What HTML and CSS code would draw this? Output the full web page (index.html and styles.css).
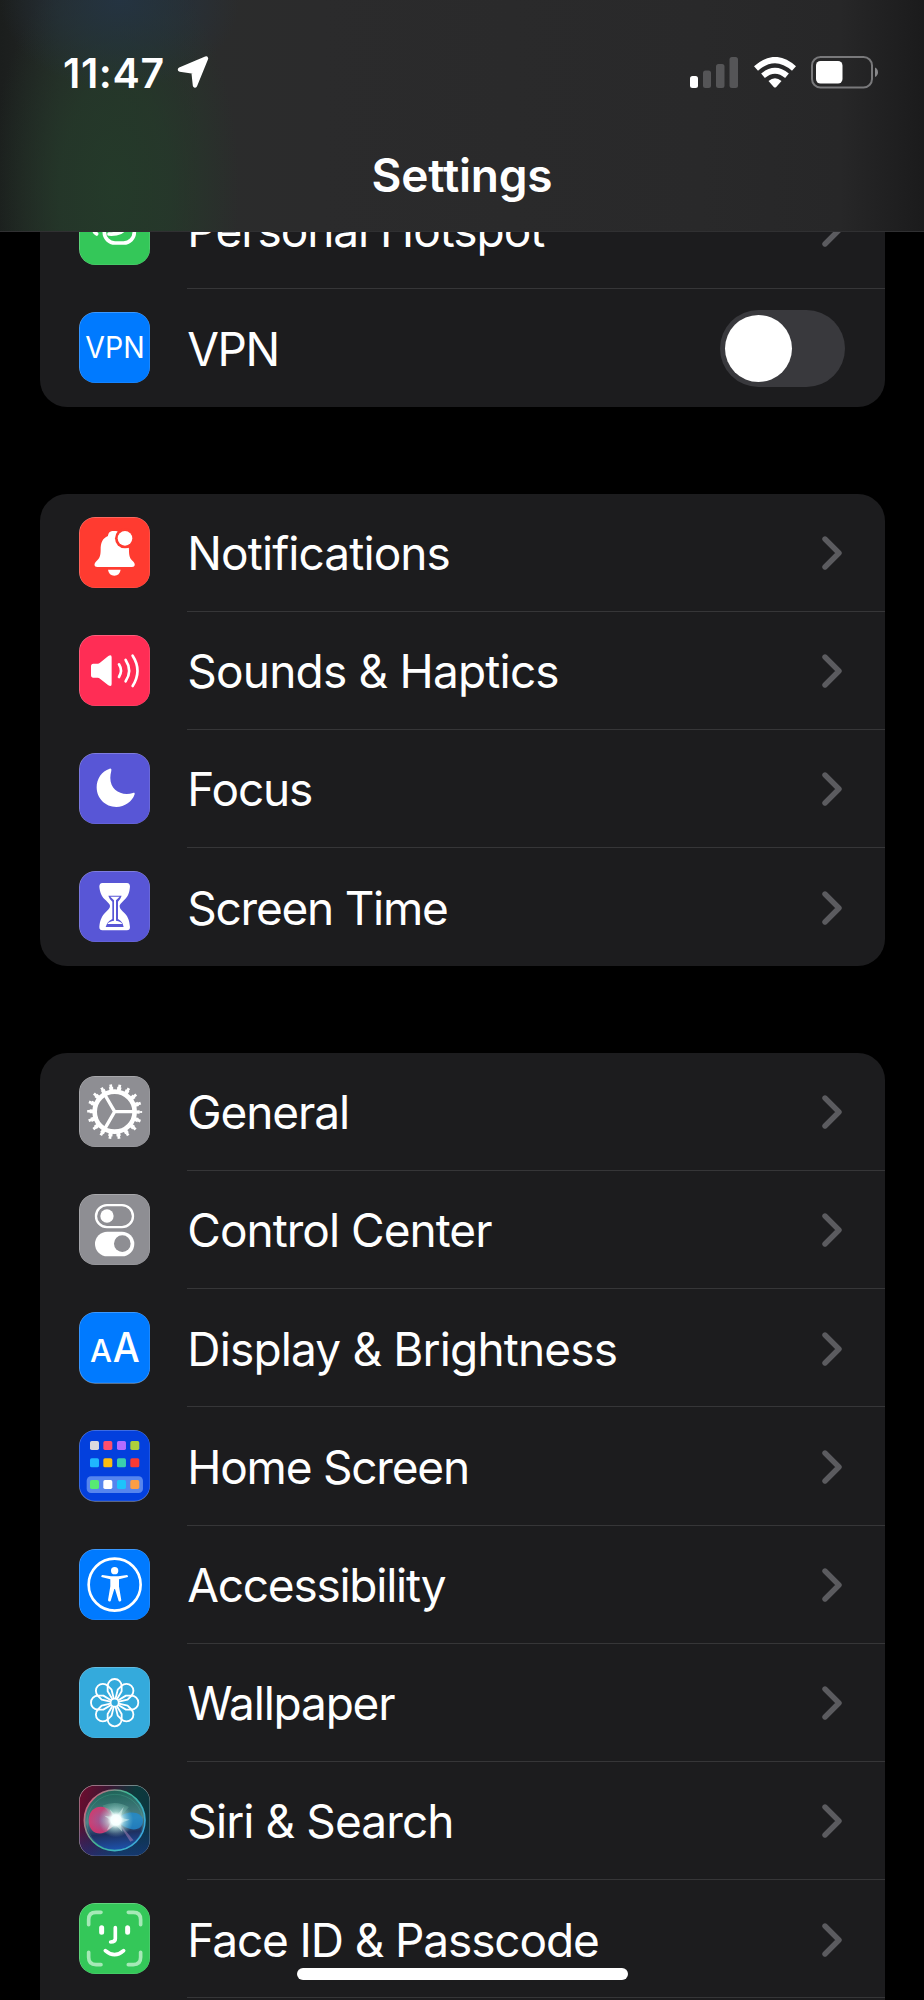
FILE: index.html
```html
<!DOCTYPE html>
<html lang="en">
<head>
  <meta charset="UTF-8" />
  <meta name="viewport" content="width=device-width, initial-scale=1.0"/>
  <title>Settings</title>
  <link rel="stylesheet" href="styles.css">
</head>
<body>

  <!-- shared shapes -->
  <svg class="defs" width="0" height="0">
    <symbol id="chevron" viewBox="0 0 20 34">
      <path d="M3 3L17 17L3 31" fill="none" stroke="#5b5b5f" stroke-width="5.4" stroke-linecap="round" stroke-linejoin="round"/>
    </symbol>
    <symbol id="petal" viewBox="-107 -107 214 214">
      <path d="M-7 -11L-21 -34V-50A21 21 0 0 1 21 -50V-34L7 -11" fill="none" stroke="#fff" stroke-width="5.5" stroke-linejoin="round"/>
    </symbol>
  </svg>

  <header class="header">
    <div class="status">
      <span class="time">11:47</span>
      <svg class="location" viewBox="0 0 33 33">
        <path d="M3 13.5L29 2.5L18 29.5L16.5 15.5Z" fill="#fff" stroke="#fff" stroke-width="4.4" stroke-linejoin="round"/>
      </svg>
      <svg class="signal" viewBox="0 0 48 31">
        <rect x="0" y="19" width="8" height="12" rx="2.5" fill="#fff"/>
        <rect x="13" y="13.5" width="8" height="17.5" rx="2.5" fill="#555557"/>
        <rect x="26" y="7" width="8.5" height="24" rx="2.5" fill="#555557"/>
        <rect x="39.5" y="0" width="8.5" height="31" rx="2.5" fill="#555557"/>
      </svg>
      <svg class="wifi" viewBox="0 0 42 31">
        <g fill="none" stroke="#fff">
          <path d="M2 11.5Q21 -5.5 40 11.5" stroke-width="6"/>
          <path d="M9 18.8Q21 8.8 33 18.8" stroke-width="5.8"/>
        </g>
        <path d="M14.5 24Q21 18.500 27.5 24L22 30.2Q21 31 20 30.2Z" fill="#fff"/>
      </svg>
      <svg class="battery" viewBox="0 0 68 33">
        <rect x="1" y="1" width="60" height="30.5" rx="8.5" fill="none" stroke="#79797b" stroke-width="2"/>
        <rect x="5" y="5" width="26.5" height="22.5" rx="4.5" fill="#fff"/>
        <path d="M64 11.5Q67 13 67 16.3T64 21Z" fill="#88888a"/>
      </svg>
    </div>
    <h1 class="title">Settings</h1>
  </header>

  <main class="list">

    <section class="group">
      <div class="row">
        <svg class="icon" viewBox="0 0 214 214">
          <rect class="tile green" width="214" height="214"/>
          <g fill="none" stroke="#fff" stroke-width="11" stroke-linecap="round">
            <rect x="76" y="62" width="90" height="85" rx="32"/>
            <path d="M44 110Q47 117 53 120M90 120Q128 122 137 104V80"/>
          </g>
        </svg>
        <div class="content">
          <span class="label hotspot">Personal Hotspot</span>
          <svg class="chevron"><use href="#chevron"/></svg>
        </div>
      </div>
      <div class="row">
        <svg class="icon" viewBox="0 0 214 214">
          <rect class="tile blue" width="214" height="214"/>
          <text x="19" y="137" font-size="91" textLength="178" lengthAdjust="spacingAndGlyphs">VPN</text>
        </svg>
        <div class="content">
          <span class="label vpn">VPN</span>
          <div class="toggle"><div class="knob"></div></div>
        </div>
      </div>
    </section>

    <section class="group">
      <div class="row">
        <svg class="icon" viewBox="0 0 214 214">
          <rect class="tile red" width="214" height="214"/>
          <path d="M105 42C92 42 88 48 87 57C70 64 65 78 65 98C65 118 61 124 52 133C44 141 45 150 55 150H159C169 150 170 141 162 133C153 124 150 118 150 98C150 78 142 64 127 57C125 48 121 42 105 42Z" fill="#fff"/>
          <path d="M87 158H125Q122 176 106 176T87 158Z" fill="#fff"/>
          <circle cx="138" cy="64" r="30" fill="#ff3b30"/>
          <circle cx="138" cy="64" r="22" fill="#fff"/>
        </svg>
        <div class="content">
          <span class="label">Notifications</span>
          <svg class="chevron"><use href="#chevron"/></svg>
        </div>
      </div>
      <div class="row">
        <svg class="icon" viewBox="0 0 214 214">
          <rect class="tile pink" width="214" height="214"/>
          <path d="M43 86H56Q60 86 63 83L88 63Q98 57 98 67V147Q98 157 88 151L63 131Q60 128 56 128H43Q36 128 36 120V94Q36 86 43 86Z" fill="#fff"/>
          <g fill="none" stroke="#fff" stroke-width="8" stroke-linecap="round">
            <path d="M120 88Q132 107 120 126"/>
            <path d="M140 75Q161 107 140 139"/>
            <path d="M161 62Q190 107 161 153"/>
          </g>
        </svg>
        <div class="content">
          <span class="label sounds">Sounds &amp; Haptics</span>
          <svg class="chevron"><use href="#chevron"/></svg>
        </div>
      </div>
      <div class="row">
        <svg class="icon" viewBox="0 0 214 214">
          <rect class="tile indigo" width="214" height="214"/>
          <path d="M92 47C68 54 53 78 53 103C53 136 79 162 112 162C137 162 160 146 167 124C168 120 166 118 162 120C128 130 94 112 94 75C94 68 95 60 97 53C98 48 96 46 92 47Z" fill="#fff"/>
        </svg>
        <div class="content">
          <span class="label focus">Focus</span>
          <svg class="chevron"><use href="#chevron"/></svg>
        </div>
      </div>
      <div class="row">
        <svg class="icon" viewBox="0 0 214 214">
          <rect class="tile indigo" width="214" height="214"/>
          <path d="M70 36H144Q153 37 153 47C151 66 148 74 138 85C125 98 122 101 122 106C122 113 128 118 137 127C149 140 151 150 153 168Q153 178 144 178H70Q61 178 61 168C63 150 66 140 77 127C87 117 93 112 93 106C93 100 89 97 77 85C66 73 63 63 61 47Q61 37 70 36Z" fill="#fff"/>
          <path d="M88 74H128Q124 86 117 92V144Q132 152 134 168H80Q84 152 100 144V92Q92 86 88 74Z" fill="#5856d6"/>
          <path d="M94 77H122L111 88V149Q126 151 130 159H85Q90 151 105 149V88Z" fill="#fff"/>
        </svg>
        <div class="content">
          <span class="label screen-time">Screen Time</span>
          <svg class="chevron"><use href="#chevron"/></svg>
        </div>
      </div>
    </section>

    <section class="group">
      <div class="row">
        <svg class="icon" viewBox="0 0 214 214">
          <rect class="tile gray" width="214" height="214"/>
          <g fill="none" stroke="#fff">
            <circle cx="107" cy="107" r="60" stroke-width="14"/>
            <circle cx="107" cy="107" r="70" stroke-width="10" pathLength="360" stroke-dasharray="10 10" stroke-dashoffset="5"/>
            <circle cx="107" cy="107" r="78" stroke-width="9" pathLength="360" stroke-dasharray="6 14" stroke-dashoffset="3"/>
            <path d="M107 107H165M107 107L78 57M107 107L78 157" stroke-width="10"/>
          </g>
        </svg>
        <div class="content">
          <span class="label general">General</span>
          <svg class="chevron"><use href="#chevron"/></svg>
        </div>
      </div>
      <div class="row">
        <svg class="icon" viewBox="0 0 214 214">
          <rect class="tile gray" width="214" height="214"/>
          <rect x="51" y="33.5" width="111" height="66" rx="33" fill="none" stroke="#fff" stroke-width="7"/>
          <circle cx="84" cy="66" r="20" fill="#fff"/>
          <rect x="48" y="113" width="118" height="74" rx="37" fill="#fff"/>
          <circle cx="130" cy="149" r="25" fill="#8e8e93"/>
        </svg>
        <div class="content">
          <span class="label control">Control Center</span>
          <svg class="chevron"><use href="#chevron"/></svg>
        </div>
      </div>
      <div class="row">
        <svg class="icon" viewBox="0 0 214 214">
          <rect class="tile blue" width="214" height="214"/>
          <text class="bold" x="33" y="150" font-size="95" textLength="66" lengthAdjust="spacingAndGlyphs">A</text>
          <text class="bold" x="101" y="150" font-size="124" textLength="81" lengthAdjust="spacingAndGlyphs">A</text>
        </svg>
        <div class="content">
          <span class="label display">Display &amp; Brightness</span>
          <svg class="chevron"><use href="#chevron"/></svg>
        </div>
      </div>
      <div class="row">
        <svg class="icon" viewBox="0 0 214 214">
          <rect class="tile navy" width="214" height="214"/>
          <rect x="23" y="139" width="169" height="50" rx="13" fill="#5685ee"/>
          <rect x="33" y="33" width="27" height="27" rx="5" fill="#d9d9de"/>
          <rect x="73" y="33" width="27" height="27" rx="5" fill="#ff4f6d"/>
          <rect x="114" y="33" width="27" height="27" rx="5" fill="#b46cff"/>
          <rect x="154" y="33" width="27" height="27" rx="5" fill="#aed03c"/>
          <rect x="33" y="85" width="27" height="27" rx="5" fill="#1fb6ff"/>
          <rect x="73" y="85" width="27" height="27" rx="5" fill="#fdbd10"/>
          <rect x="114" y="85" width="27" height="27" rx="5" fill="#3acfae"/>
          <rect x="154" y="85" width="27" height="27" rx="5" fill="#fb3a33"/>
          <rect x="33" y="150" width="27" height="27" rx="5" fill="#57ea73"/>
          <rect x="73" y="150" width="27" height="27" rx="5" fill="#fff"/>
          <rect x="114" y="150" width="27" height="27" rx="5" fill="#1dc3fb"/>
          <rect x="154" y="150" width="27" height="27" rx="5" fill="#fb9e46"/>
        </svg>
        <div class="content">
          <span class="label home-screen">Home Screen</span>
          <svg class="chevron"><use href="#chevron"/></svg>
        </div>
      </div>
      <div class="row">
        <svg class="icon" viewBox="0 0 214 214">
          <rect class="tile blue" width="214" height="214"/>
          <circle cx="107" cy="107" r="78" fill="none" stroke="#fff" stroke-width="8"/>
          <circle cx="107" cy="65" r="11" fill="#fff"/>
          <path d="M70 78L96 82H118L144 78Q148 79 147 84L120 91V112L127 154Q124 160 119 156L108 120H106L95 156Q90 160 87 154L94 112V91L67 84Q66 79 70 78Z" fill="#fff"/>
        </svg>
        <div class="content">
          <span class="label accessibility">Accessibility</span>
          <svg class="chevron"><use href="#chevron"/></svg>
        </div>
      </div>
      <div class="row">
        <svg class="icon" viewBox="0 0 214 214">
          <rect class="tile cyan" width="214" height="214"/>
          <use href="#petal" width="214" height="214"/>
          <use href="#petal" width="214" height="214" transform="rotate(45 107 107)"/>
          <use href="#petal" width="214" height="214" transform="rotate(90 107 107)"/>
          <use href="#petal" width="214" height="214" transform="rotate(135 107 107)"/>
          <use href="#petal" width="214" height="214" transform="rotate(180 107 107)"/>
          <use href="#petal" width="214" height="214" transform="rotate(225 107 107)"/>
          <use href="#petal" width="214" height="214" transform="rotate(270 107 107)"/>
          <use href="#petal" width="214" height="214" transform="rotate(315 107 107)"/>
          <circle cx="107" cy="107" r="12" fill="#34aadc" stroke="#fff" stroke-width="5"/>
        </svg>
        <div class="content">
          <span class="label wallpaper">Wallpaper</span>
          <svg class="chevron"><use href="#chevron"/></svg>
        </div>
      </div>
      <div class="row">
        <svg class="icon" viewBox="0 0 214 214">
          <defs>
            <linearGradient id="siriBack" x1="0" y1="0.2" x2="1" y2="0.5">
              <stop offset="0" stop-color="#6b0c2e"/>
              <stop offset="0.35" stop-color="#3a1733"/>
              <stop offset="0.7" stop-color="#0c3a3c"/>
              <stop offset="1" stop-color="#0c3440"/>
            </linearGradient>
            <linearGradient id="siriFloor" x1="0" y1="0" x2="0" y2="1">
              <stop offset="0.55" stop-color="#1a3690" stop-opacity="0"/>
              <stop offset="1" stop-color="#1a3a90" stop-opacity="0.6"/>
            </linearGradient>
            <linearGradient id="siriOrb" x1="0.4" y1="0" x2="0.5" y2="1">
              <stop offset="0" stop-color="#1d6357"/>
              <stop offset="0.5" stop-color="#4c7f86"/>
              <stop offset="0.72" stop-color="#1f3060"/>
              <stop offset="1" stop-color="#1c53ae"/>
            </linearGradient>
            <linearGradient id="siriRing" x1="0" y1="0.2" x2="1" y2="0.8">
              <stop offset="0" stop-color="#e0567c"/>
              <stop offset="0.45" stop-color="#3fbb94"/>
              <stop offset="1" stop-color="#3aa5e8"/>
            </linearGradient>
            <radialGradient id="siriPink">
              <stop offset="0" stop-color="#a5559c"/>
              <stop offset="1" stop-color="#e53470"/>
            </radialGradient>
            <radialGradient id="siriGlow">
              <stop offset="0" stop-color="#fff"/>
              <stop offset="0.3" stop-color="#f5ffff"/>
              <stop offset="0.5" stop-color="#c8f0ea" stop-opacity="0.6"/>
              <stop offset="1" stop-color="#8cc" stop-opacity="0"/>
            </radialGradient>
          </defs>
          <rect class="tile" width="214" height="214" fill="url(#siriBack)"/>
          <rect class="tile" width="214" height="214" fill="url(#siriFloor)"/>
          <circle cx="107" cy="106" r="91" fill="url(#siriOrb)" stroke="url(#siriRing)" stroke-width="5"/>
          <circle cx="108" cy="112" r="84" fill="none" stroke="#5cd6ae" stroke-opacity="0.3" stroke-width="2"/>
          <path d="M110 106C96 50 30 54 29 105C29 160 92 158 110 106Z" fill="url(#siriPink)" opacity="0.85"/>
          <path d="M110 106C140 72 192 78 192 108C190 140 150 144 110 106Z" fill="#208bd0" opacity="0.8"/>
          <path d="M70 62Q110 45 150 66L114 106Z" fill="#74b6a5" opacity="0.35"/>
          <path d="M113 106L164 166L154 170Z" fill="#bb8cc0" opacity="0.45"/>
          <path d="M92 72L112 94L134 66L124 98L152 104L124 114L130 140L110 120L84 136L98 108L76 92L102 96Z" fill="#fff" opacity="0.55"/>
          <circle cx="111" cy="105" r="52" fill="url(#siriGlow)"/>
        </svg>
        <div class="content">
          <span class="label">Siri &amp; Search</span>
          <svg class="chevron"><use href="#chevron"/></svg>
        </div>
      </div>
      <div class="row">
        <svg class="icon" viewBox="0 0 214 214">
          <rect class="tile green" width="214" height="214"/>
          <g fill="none" stroke-linecap="round">
            <path d="M29 65V50Q29 28 51 28H66M148 28H163Q185 28 185 50V65M29 148V163Q29 185 51 185H66M148 185H163Q185 185 185 163V148" stroke="#a6e9b7" stroke-width="11"/>
            <path d="M68 74V88M146 74V88" stroke="#fff" stroke-width="15"/>
            <path d="M109 74V107Q109 117 95 117M79 143Q107 167 134 143" stroke="#fff" stroke-width="11"/>
          </g>
        </svg>
        <div class="content">
          <span class="label face-id">Face ID &amp; Passcode</span>
          <svg class="chevron"><use href="#chevron"/></svg>
        </div>
      </div>
      <div class="row"></div>
    </section>

  </main>

  <div class="home-indicator"></div>

</body>
</html>
```
FILE: styles.css
```css
* {
  box-sizing: border-box;
}
body {
  margin: 0;
  position: relative;
  height: 2000px;
  overflow: hidden;
  background: #000;
  color: #fff;
  font-family: Inter, "Liberation Sans", sans-serif;
}
.defs {
  position: absolute;
}

.header {
  position: absolute;
  z-index: 2;
  top: 0;
  left: 0;
  width: 100%;
  height: 232px;
  border-bottom: 1px solid #303032;
  background:
    radial-gradient(ellipse 120px 90px at 120px 0, rgba(36, 52, 68, 0.9), rgba(36, 52, 68, 0.45) 55%, rgba(36, 52, 68, 0)),
    radial-gradient(ellipse 125px 240px at 115px 190px, rgba(36, 60, 42, 0.9), rgba(36, 60, 42, 0.7) 45%, rgba(36, 60, 42, 0)),
    linear-gradient(90deg, #1b1e1d 0, #242726 60px, #2b2c2c 200px, #2b2b2c 320px, #29292a 700px, #272728 840px, #1b1b1c 100%);
}
.status {
  display: flex;
  align-items: center;
  height: 145px;
  padding: 0 45px 0 63px;
}
.time {
  width: 114px;
  font-size: 41px;
  font-weight: 600;
  line-height: 50px;
  letter-spacing: 0.6px;
}
.location {
  width: 33px;
  height: 33px;
  margin-right: auto;
}
.signal {
  width: 48px;
  height: 31px;
  margin-right: 16px;
}
.wifi {
  width: 42px;
  height: 31px;
  margin-right: 15px;
}
.battery {
  width: 68px;
  height: 33px;
}
.title {
  margin: -1px 0 0;
  text-align: center;
  font-size: 46px;
  font-weight: 600;
  line-height: 62px;
  letter-spacing: -0.2px;
}

.list {
  display: flex;
  flex-direction: column;
  gap: 86.5px;
  height: 2000px;
  padding: 170.8px 39.5px 0;
  overflow: hidden;
}
.group {
  flex-shrink: 0;
  border-radius: 27px;
  background: #1c1c1e;
  overflow: hidden;
}
.row {
  display: flex;
  align-items: center;
  height: 118.2px;
  padding-left: 39.5px;
}
.icon {
  width: 71.3px;
  height: 71.3px;
  margin-top: -1px;
  border-radius: 16px;
}
.icon text {
  fill: #fff;
  font-family: Inter, "Liberation Sans", sans-serif;
}
.icon .bold {
  font-weight: 500;
}
.tile {
  stroke: rgba(255, 255, 255, 0.3);
  stroke-width: 4px;
  rx: 48px;
}
.green { fill: #34c759; }
.blue { fill: #007aff; }
.red { fill: #ff3b30; }
.pink { fill: #ff2d55; }
.indigo { fill: #5856d6; }
.gray { fill: #8e8e93; }
.navy { fill: #0340dd; }
.cyan { fill: #34aadc; }

.content {
  flex: 1;
  display: flex;
  align-items: center;
  justify-content: space-between;
  height: 100%;
  margin-left: 37px;
  padding: 1.5px 42.5px 0 0;
  border-bottom: 1px solid #363638;
}
.row:last-child .content {
  border-bottom: none;
}
.label {
  font-size: 46px;
  line-height: 60px;
  letter-spacing: -0.9px;
  white-space: nowrap;
}
/* tracking per label */
.hotspot { letter-spacing: -1.05px; }
.vpn { letter-spacing: -1.5px; }
.sounds { letter-spacing: -0.8px; }
.focus { letter-spacing: -1.15px; }
.screen-time { letter-spacing: -1.25px; }
.general { letter-spacing: -1.1px; }
.control { letter-spacing: -0.98px; }
.display { letter-spacing: -0.84px; }
.home-screen { letter-spacing: -1.22px; }
.accessibility { letter-spacing: -1.25px; }
.wallpaper { letter-spacing: -1.2px; }
.face-id { letter-spacing: -1.12px; }

.chevron {
  width: 20px;
  height: 34px;
}
.toggle {
  width: 125px;
  height: 77px;
  margin-right: -3px;
  padding: 5px;
  border-radius: 39px;
  background: #39393d;
}
.knob {
  width: 67px;
  height: 67px;
  border-radius: 50%;
  background: #fff;
}

.home-indicator {
  position: absolute;
  z-index: 3;
  left: 297px;
  top: 1968px;
  width: 331px;
  height: 12px;
  border-radius: 6px;
  background: #fff;
}
```
